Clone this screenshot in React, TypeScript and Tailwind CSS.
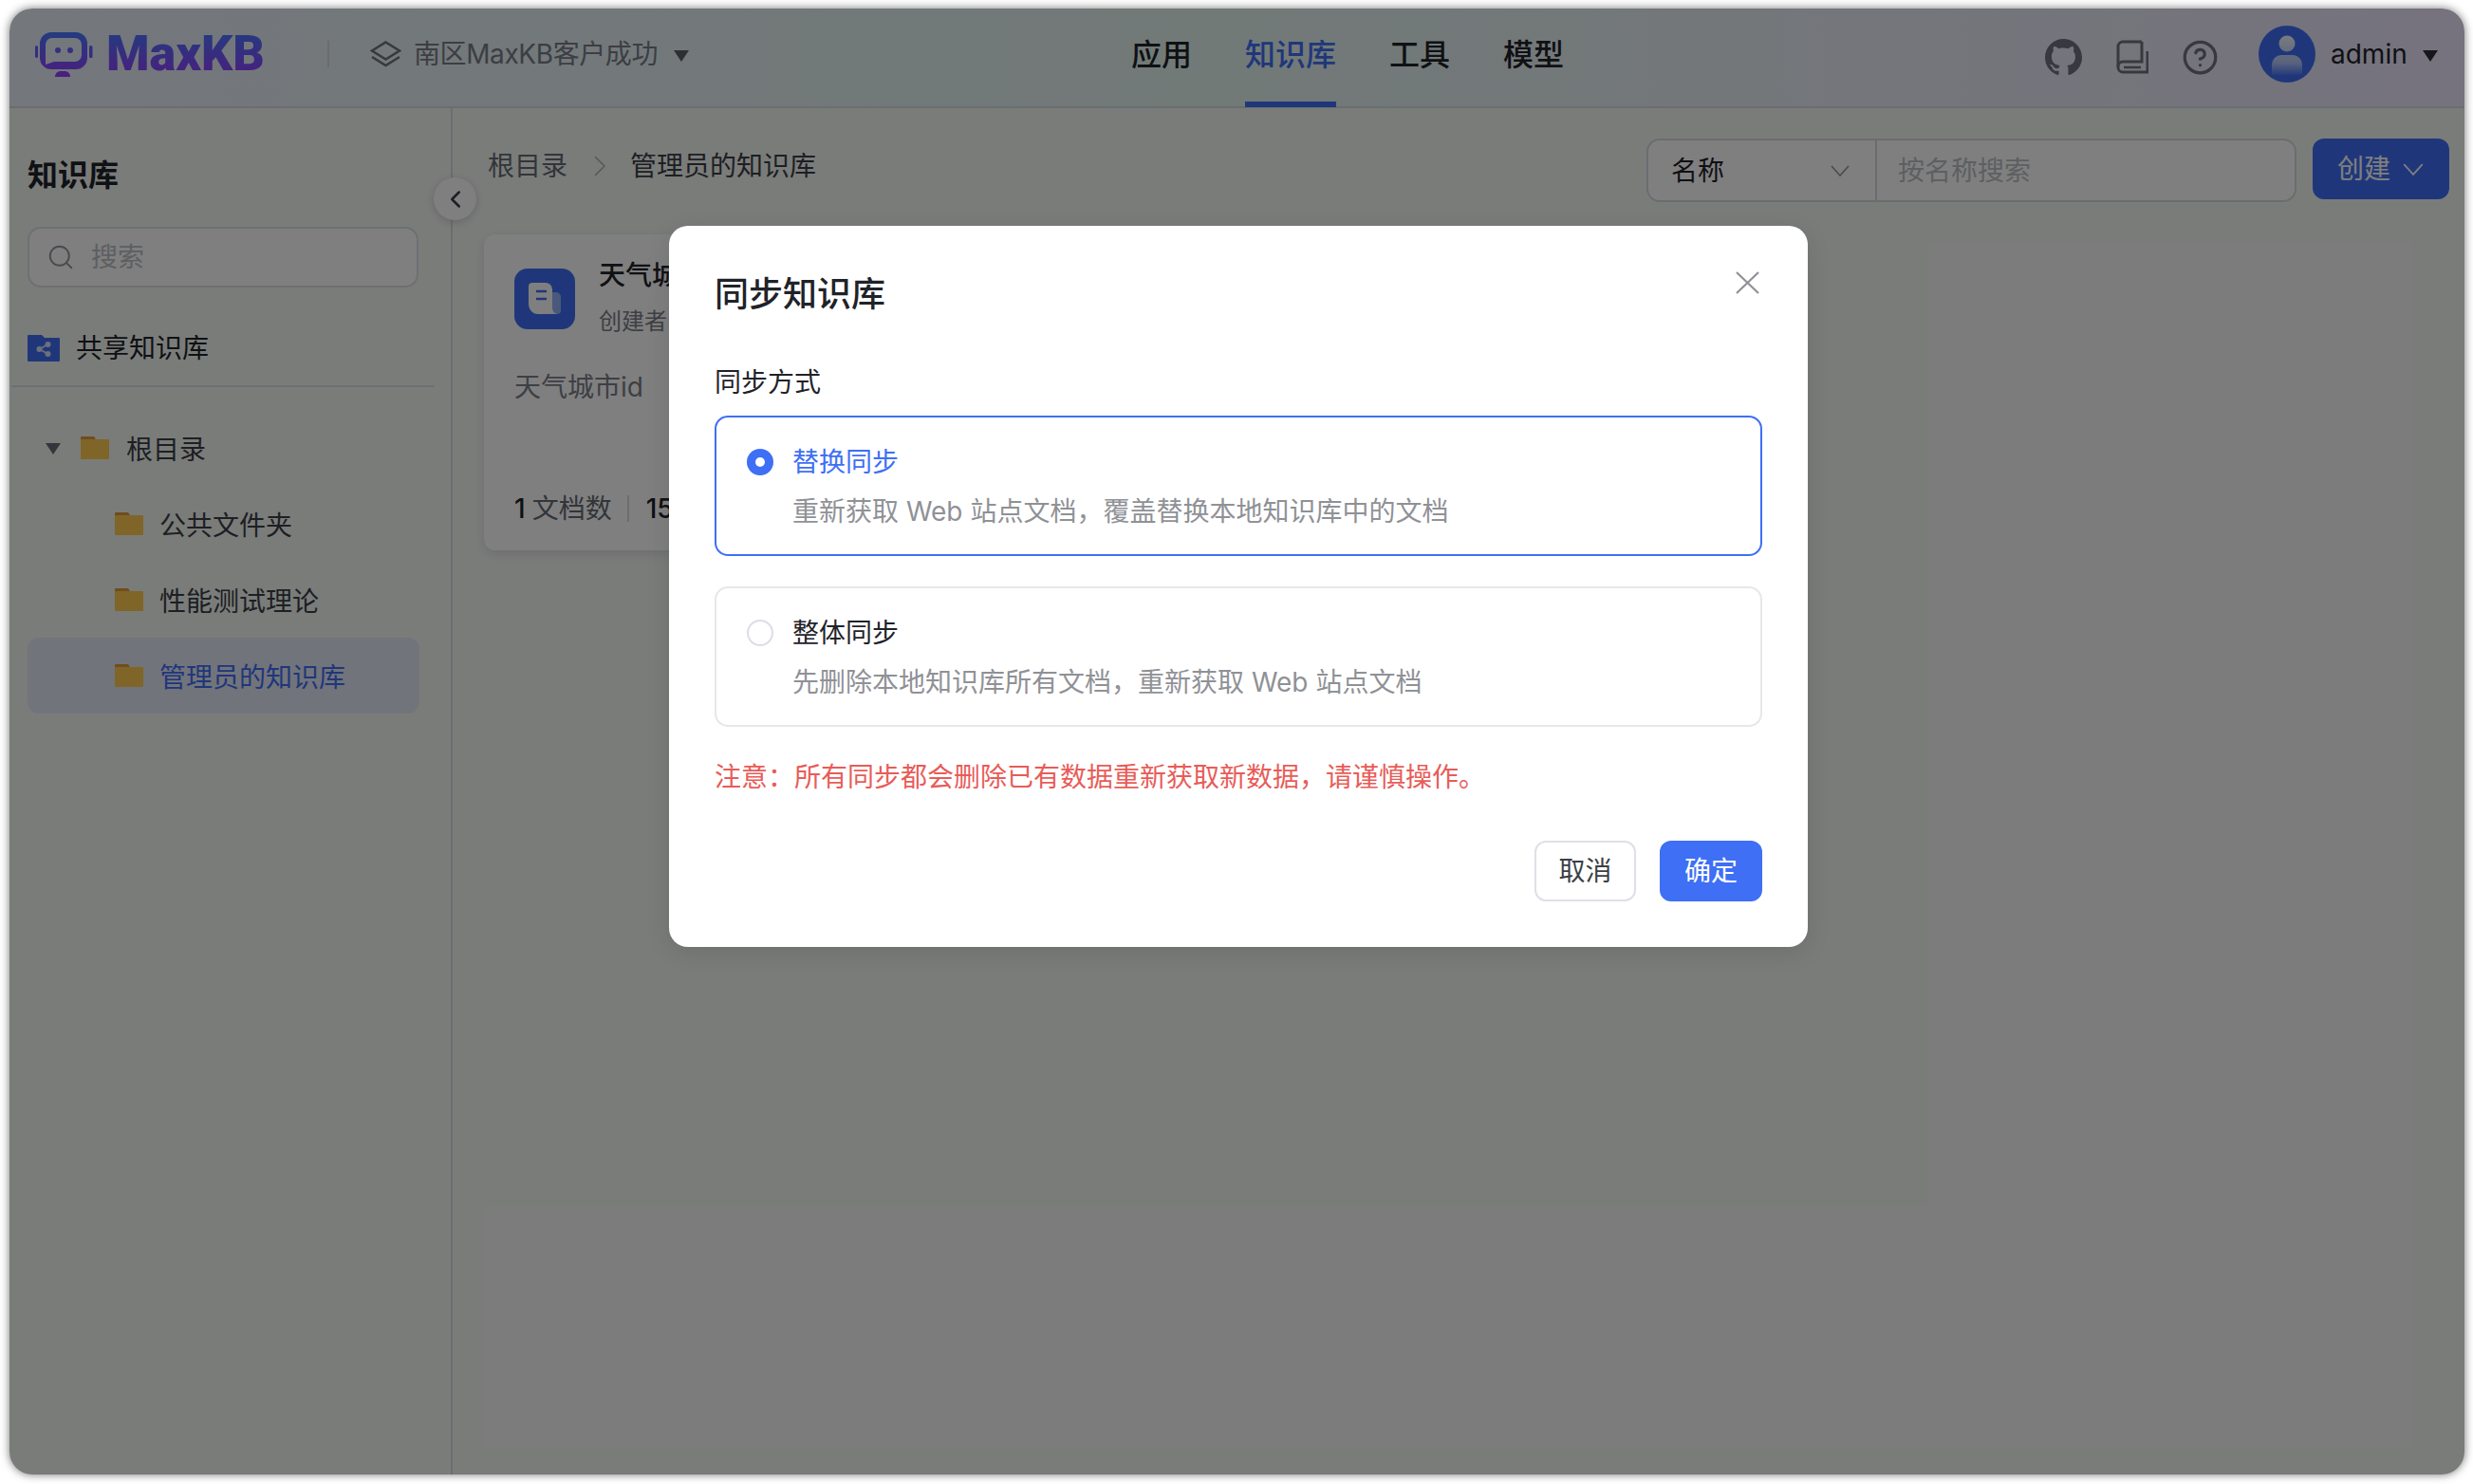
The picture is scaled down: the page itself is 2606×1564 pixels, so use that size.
import { ChevronLeft, CircleHelp, Search } from 'lucide-react';
import { VscGithubInverted } from 'react-icons/vsc';

const navItems = ['应用', '知识库', '工具', '模型'];

const Caret = ({ className }: { className: string }) => (
  <svg viewBox="0 0 16 12" className={className}>
    <path d="M0 0h16L8 12z" fill="currentColor" />
  </svg>
);

const Chevron = ({ className }: { className: string }) => (
  <svg viewBox="0 0 20 12" className={className} fill="none" stroke="currentColor" strokeWidth="1.6">
    <path d="M1 1l9 10 9-10" />
  </svg>
);

const Folder = () => (
  <svg viewBox="0 0 30 24" className="w-[30px] h-[24px] shrink-0">
    <path d="M1 0h13l2 3v6H0V1a1 1 0 0 1 1-1z" fill="#e0983c" />
    <path d="M1 3h28a1 1 0 0 1 1 1v19a1 1 0 0 1-1 1H1a1 1 0 0 1-1-1V4a1 1 0 0 1 1-1z" fill="#fecb50" />
  </svg>
);

const Logo = () => (
  <svg viewBox="0 0 61 47" className="w-[61px] h-[47px] shrink-0">
    <defs>
      <linearGradient id="logoFill" x1="0" y1="0" x2="0" y2="47" gradientUnits="userSpaceOnUse">
        <stop offset="0" stopColor="#4678ff" />
        <stop offset="1" stopColor="#963cff" />
      </linearGradient>
    </defs>
    <path
      fillRule="evenodd"
      fill="url(#logoFill)"
      d="M17 0h26a12 12 0 0 1 12 12v15a12 12 0 0 1-12 12H17A12 12 0 0 1 5 27V12A12 12 0 0 1 17 0zm1 6a7 7 0 0 0-7 7v21l9-3h22a7 7 0 0 0 7-7V13a7 7 0 0 0-7-7z"
    />
    <rect x="0" y="14" width="3" height="13" rx="1.5" fill="url(#logoFill)" />
    <rect x="57" y="14" width="3.5" height="13" rx="1.5" fill="url(#logoFill)" />
    <circle cx="24" cy="19" r="3" fill="url(#logoFill)" />
    <circle cx="37" cy="19" r="3" fill="url(#logoFill)" />
    <path d="M21 47c0-4 3-6 6-6h4c3 0 6 2 6 6z" fill="url(#logoFill)" />
  </svg>
);

const TreeRow = ({ label, active }: { label: string; active?: boolean }) => (
  <div className={`ml-[19px] w-[413px] h-[80px] pl-[92px] flex items-center gap-[17px] rounded-[12px] ${active ? 'bg-[#e4e8f6] text-[#3e6ff5]' : 'text-[#3b3f46]'}`}>
    <Folder />
    <span className="pt-[3px]">{label}</span>
  </div>
);

const SyncOption = ({ title, desc, selected }: { title: string; desc: string; selected?: boolean }) => (
  <div className={`h-[148px] rounded-[14px] border-2 pl-[32px] pt-[27px] ${selected ? 'border-[#3e6ff5]' : 'border-[#e6e7ec]'}`}>
    <div className="flex items-center gap-[20px] h-[40px]">
      {selected ? (
        <span className="w-[28px] h-[28px] rounded-full bg-[#3e6ff5] flex items-center justify-center">
          <span className="w-[10px] h-[10px] rounded-full bg-white" />
        </span>
      ) : (
        <span className="w-[28px] h-[28px] rounded-full border-2 border-[#dcdee4] bg-white" />
      )}
      <span className={selected ? 'text-[#3e6ff5]' : 'text-[#1f2329]'}>{title}</span>
    </div>
    <div className="ml-[48px] mt-[12px] h-[40px] leading-[40px] text-[#8f9196]">{desc}</div>
  </div>
);

export default function App() {
  return (
    <div className="w-[2606px] h-[1564px] overflow-hidden bg-white pl-[10px] pt-[9px] text-[28px] [font-family:Inter,'Noto_Sans_CJK_SC',sans-serif]">
      <div className="relative w-[2587px] h-[1545px] overflow-hidden rounded-[24px] bg-[#f5f8f5] shadow-[0_0_10px_rgba(0,0,0,0.55)]">
        {/* Header */}
        <header className="flex items-start h-[105px] border-b-2 border-[#d8dae4] bg-[linear-gradient(90deg,#e8eef8,#e4f4f0_50%,#ece6fc)]">
          <div className="w-[1182px] h-[96px] pl-[27px] flex items-center shrink-0">
            <Logo />
            <span className="ml-[14px] w-[168px] whitespace-nowrap text-[52px] leading-none font-black bg-[linear-gradient(180deg,#4678ff,#963cff)] bg-clip-text text-transparent [font-family:Roboto,sans-serif]">
              MaxKB
            </span>
            <span className="ml-[65px] w-[2px] h-[28px] bg-[#d4d7dc]" />
            <svg viewBox="0 0 33 28" className="ml-[43px] w-[33px] h-[28px] shrink-0" fill="none" stroke="#6e727e" strokeWidth="2.6">
              <path d="M16.5 1.5L31 10.5l-14.5 9-14.5-9z" />
              <path d="M2 17l14.5 9L31 17" />
            </svg>
            <span className="ml-[13px] w-[258px] whitespace-nowrap tracking-[-0.4px] text-[#787c88]">南区MaxKB客户成功</span>
            <Caret className="ml-[16px] w-[16px] h-[12px] mt-[3px] text-[#5a5e68]" />
          </div>
          <nav className="flex gap-[56px] h-[104px] text-[32px] font-medium">
            {navItems.map((item) => (
              <div
                key={item}
                className={`h-[104px] flex items-center border-b-[6px] ${item === '知识库' ? 'border-[#3e6ff5] text-[#3e6ff5]' : 'border-transparent text-[#1f2329]'}`}
              >
                {item}
              </div>
            ))}
          </nav>
          <div className="ml-auto pr-[28px] h-[96px] flex items-center text-[#6e727e]">
            <VscGithubInverted className="w-[39px] h-[39px] mt-[6px]" />
            <svg viewBox="0 0 34 36" className="ml-[36px] w-[34px] h-[36px] mt-[6px]" fill="none" stroke="currentColor" strokeWidth="3">
              <path d="M27 2H7a5 5 0 0 0-5 5v22a5 5 0 0 0 5 5h26V12" />
              <path d="M2 28a5 5 0 0 1 5-5h20V2" />
              <path d="M8 29h18" strokeWidth="2.5" />
            </svg>
            <CircleHelp size={39} strokeWidth={2} className="ml-[35px] mt-[6px]" />
            <svg viewBox="0 0 60 60" className="ml-[42px] w-[60px] h-[60px] shrink-0">
              <defs>
                <linearGradient id="avatarFade" x1="0" y1="10" x2="0" y2="52" gradientUnits="userSpaceOnUse">
                  <stop offset="0" stopColor="#fff" stopOpacity="0.95" />
                  <stop offset="0.7" stopColor="#fff" stopOpacity="0.6" />
                  <stop offset="1" stopColor="#fff" stopOpacity="0.05" />
                </linearGradient>
              </defs>
              <circle cx="30" cy="30" r="30" fill="#3e6ff5" />
              <circle cx="30" cy="19" r="8.5" fill="url(#avatarFade)" />
              <path d="M14 41a10 10 0 0 1 10-10h12a10 10 0 0 1 10 10v11H14z" fill="url(#avatarFade)" />
            </svg>
            <span className="ml-[16px] w-[79px] text-[#1f2329]">admin</span>
            <Caret className="ml-[18px] w-[16px] h-[12px] mt-[3px] text-[#2b2f36]" />
          </div>
        </header>

        <div className="flex h-[1440px]">
          {/* Sidebar */}
          <aside className="w-[467px] shrink-0 border-r-2 border-[#d8dae0] pt-[49px]">
            <div className="ml-[19px] h-[44px] leading-[44px] text-[32px] font-semibold text-[#1f2329]">知识库</div>
            <div className="ml-[19px] mt-[32px] w-[412px] h-[64px] rounded-[14px] border-2 border-[#dcdfe6] bg-white pl-[18px] flex items-center gap-[17px] text-[#bbbfc4]">
              <Search size={30} strokeWidth={1.5} className="text-[#8f959e] shrink-0" />
              <span>搜索</span>
            </div>
            <div className="ml-[19px] mt-[40px] h-[48px] flex items-center gap-[17px] text-[#1f2329]">
              <svg viewBox="0 0 34 28" className="w-[34px] h-[28px] shrink-0">
                <path d="M0 1a1 1 0 0 1 1-1h14l3 3h15a1 1 0 0 1 1 1v23a1 1 0 0 1-1 1H1a1 1 0 0 1-1-1z" fill="#3e6ff5" />
                <path d="M13 15l8-5M13 15l8 5" stroke="#d8e0f6" strokeWidth="1.6" />
                <circle cx="12.5" cy="15" r="3" fill="#d8e0f6" />
                <circle cx="21.5" cy="10" r="3" fill="#d8e0f6" />
                <circle cx="21.5" cy="20" r="3" fill="#d8e0f6" />
              </svg>
              <span>共享知识库</span>
            </div>
            <div className="ml-[2px] mt-[15px] w-[446px] h-[2px] bg-[#dcdee4]" />
            <div className="mt-[24px]">
              <div className="ml-[19px] h-[80px] pl-[17px] flex items-center text-[#3b3f46]">
                <Caret className="w-[20px] h-[12px] mt-[2px] text-[#6a6c76]" />
                <span className="ml-[19px]">
                  <Folder />
                </span>
                <span className="ml-[18px] pt-[3px]">根目录</span>
              </div>
              <TreeRow label="公共文件夹" />
              <TreeRow label="性能测试理论" />
              <TreeRow label="管理员的知识库" active />
            </div>
          </aside>

          {/* Main */}
          <main className="flex-1 pl-[33px] pr-[16px] pt-[32px]">
            <div className="flex items-start justify-between">
              <div className="pl-[4px] h-[58px] flex items-center text-[#646a73]">
                <span>根目录</span>
                <svg viewBox="0 0 12 22" className="ml-[28px] w-[12px] h-[22px] text-[#a8acb3]" fill="none" stroke="currentColor" strokeWidth="1.5">
                  <path d="M1 1l10 10L1 21" />
                </svg>
                <span className="ml-[26px] text-[#3b3f46]">管理员的知识库</span>
              </div>
              <div className="flex items-start gap-[17px]">
                <div className="w-[685px] h-[67px] flex rounded-[14px] border-2 border-[#d8d9e0] bg-white">
                  <div className="w-[241px] h-full pl-[24px] pr-[27px] flex items-center justify-between border-r-2 border-[#d8d9e0] text-[#1f2329]">
                    <span>名称</span>
                    <Chevron className="w-[20px] h-[12px] text-[#8f959e]" />
                  </div>
                  <div className="pl-[22px] flex items-center text-[#bbbfc4]">按名称搜索</div>
                </div>
                <div className="w-[144px] h-[64px] pl-[26px] rounded-[12px] bg-[#3e6ff5] flex items-center text-white">
                  <span>创建</span>
                  <Chevron className="ml-[13px] w-[22px] h-[13px]" />
                </div>
              </div>
            </div>

            <div className="mt-[34px] w-[660px] h-[333px] rounded-[12px] bg-white pl-[32px] pt-[36px] shadow-[0_4px_12px_rgba(31,35,41,0.12)]">
              <div className="flex">
                <div className="w-[64px] h-[64px] rounded-[14px] bg-[#3e6ff5] flex items-center justify-center shrink-0">
                  <svg viewBox="0 0 36 34" className="w-[36px] h-[34px]">
                    <path d="M26 10h4a5 5 0 0 1 5 5v14a4 4 0 0 1-4 4H26z" fill="#fff" fillOpacity="0.45" />
                    <path d="M5 0h14a7 7 0 0 1 7 7v19a7 7 0 0 0 5 7H11C5 33 1 28 1 22V4a4 4 0 0 1 4-4z" fill="#fff" />
                    <path d="M9 9h11M9 17h11" stroke="#3e6ff5" strokeWidth="2.6" />
                  </svg>
                </div>
                <div className="ml-[25px] -mt-[13px]">
                  <div className="h-[40px] leading-[40px] font-medium text-[#1f2329]">天气城市</div>
                  <div className="mt-[11px] h-[36px] leading-[36px] text-[24px] text-[#7a7f88]">创建者: admin</div>
                </div>
              </div>
              <div className="mt-[29px] h-[44px] leading-[44px] text-[#7a7f88]">天气城市id</div>
              <div className="mt-[86px] h-[40px] flex items-center text-[#646a73]">
                <span className="font-medium text-[#1f2329]">1</span>
                <span className="ml-[7px]">文档数</span>
                <span className="ml-[16px] w-[2px] h-[28px] bg-[#d8dae0]" />
                <span className="ml-[18px] font-medium text-[#1f2329]">15</span>
                <span className="ml-[7px]">分段数</span>
              </div>
            </div>
          </main>
        </div>

        {/* Collapse handle */}
        <div className="absolute left-[447px] top-[178px] w-[45px] h-[45px] rounded-full bg-white flex items-center justify-center shadow-[0_2px_10px_rgba(31,35,41,0.2)] text-[#3b3f46]">
          <ChevronLeft size={30} strokeWidth={2} />
        </div>

        {/* Dialog overlay */}
        <div className="absolute inset-0 bg-black/50 pl-[695px] pt-[229px]">
          <div className="w-[1200px] h-[760px] rounded-[20px] bg-white pl-[48px] pr-[48px] pt-[48px] shadow-[0_6px_24px_rgba(31,35,41,0.12)]">
            <div className="flex items-start justify-between h-[48px]">
              <span className="text-[36px] leading-[48px] font-medium text-[#1f2329]">同步知识库</span>
              <svg viewBox="0 0 25 24" className="mr-[3px] w-[25px] h-[24px] text-[#8f9196]" fill="none" stroke="currentColor" strokeWidth="2.2">
                <path d="M1 1l23 22M24 1L1 23" />
              </svg>
            </div>
            <div className="mt-[49px] h-[40px] leading-[40px] text-[#1f2329]">同步方式</div>
            <div className="mt-[15px] flex flex-col gap-[32px]">
              <SyncOption selected title="替换同步" desc="重新获取 Web 站点文档，覆盖替换本地知识库中的文档" />
              <SyncOption title="整体同步" desc="先删除本地知识库所有文档，重新获取 Web 站点文档" />
            </div>
            <div className="mt-[33px] h-[40px] leading-[40px] text-[#e85c58]">注意：所有同步都会删除已有数据重新获取新数据，请谨慎操作。</div>
            <div className="mt-[47px] flex justify-end gap-[25px]">
              <div className="w-[107px] h-[64px] rounded-[12px] border-2 border-[#dfe0e6] flex items-center justify-center text-[#3b3f46]">取消</div>
              <div className="w-[108px] h-[64px] rounded-[12px] bg-[#3e6ff5] flex items-center justify-center text-white">确定</div>
            </div>
          </div>
        </div>
      </div>
    </div>
  );
}
